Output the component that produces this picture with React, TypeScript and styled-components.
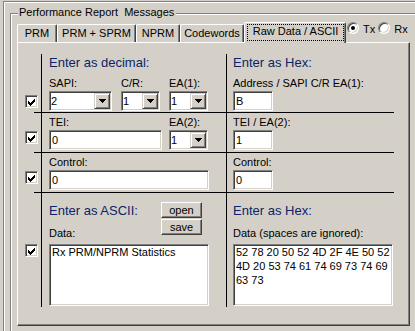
import styled, { createGlobalStyle } from 'styled-components';

const FACE = '#d4d0c8';
const SHADOW = '#808080';
const DARK = '#404040';
const TITLE = '#0a246a';

const GlobalStyle = createGlobalStyle`
  html, body {
    margin: 0;
    padding: 0;
    background: ${FACE};
    overflow: hidden;
  }
  body {
    font-family: "Liberation Sans", Arial, sans-serif;
    font-size: 11px;
    color: #000;
  }
  * {
    box-sizing: border-box;
  }
`;

const CheckMark = () => (
  <svg width="13" height="13" viewBox="0 0 13 13" shapeRendering="crispEdges">
    {[4, 5, 6, 5, 4, 3, 2].map((top, i) => (
      <rect key={i} x={i + 3} y={top + 2} width="1" height="3" fill="#000" />
    ))}
  </svg>
);

const DownArrow = () => (
  <svg width="7" height="4" viewBox="0 0 7 4" shapeRendering="crispEdges">
    <path d="M0 0h7v1H0z M1 1h5v1H1z M2 2h3v1H2z M3 3h1v1H3z" fill="#000" />
  </svg>
);

const Combo = ({ value, w }: { value: string; w: number }) => (
  <ComboBox $w={w}>
    <ComboValue>{value}</ComboValue>
    <DropButton>
      <DownArrow />
    </DropButton>
  </ComboBox>
);

const Check = () => (
  <CheckBox>
    <CheckMark />
  </CheckBox>
);

export default function App() {
  return (
    <>
      <GlobalStyle />
      <Frame>
        <GroupHead>
          <HeadLead />
          <GroupTitle>Performance Report  Messages</GroupTitle>
          <HeadTail />
        </GroupHead>
        <GroupBody>
          <TabStrip>
            <Tab $w={40}>PRM</Tab>
            <Tab $w={79}>PRM + SPRM</Tab>
            <Tab $w={44}>NPRM</Tab>
            <Tab $w={64}>Codewords</Tab>
            <Tab $w={102} $active>
              <FocusRect>Raw Data / ASCII</FocusRect>
            </Tab>
            <RadioGroup>
              <Radio $checked />
              <RadioLabel>Tx</RadioLabel>
              <Radio />
              <RadioLabel>Rx</RadioLabel>
            </RadioGroup>
          </TabStrip>

          <Panel>
            <Form>
              <Row $first>
                <CheckCell $offset={41}>
                  <Check />
                </CheckCell>
                <Cell $left>
                  <Heading>Enter as decimal:</Heading>
                  <FieldRow $mt={7}>
                    <Field>
                      <Label>SAPI:</Label>
                      <Combo value="2" w={63} />
                    </Field>
                    <Field>
                      <Label>C/R:</Label>
                      <Combo value="1" w={39} />
                    </Field>
                    <Field>
                      <Label>EA(1):</Label>
                      <Combo value="1" w={39} />
                    </Field>
                  </FieldRow>
                </Cell>
                <Cell>
                  <Heading>Enter as Hex:</Heading>
                  <Field $mt={7}>
                    <Label>Address / SAPI C/R EA(1):</Label>
                    <TextBox $w={40} defaultValue="B" />
                  </Field>
                </Cell>
              </Row>

              <Row>
                <CheckCell $offset={18}>
                  <Check />
                </CheckCell>
                <Cell $left $compact>
                  <FieldRow>
                    <Field>
                      <Label>TEI:</Label>
                      <TextBox $w={113} defaultValue="0" />
                    </Field>
                    <Field>
                      <Label>EA(2):</Label>
                      <Combo value="1" w={39} />
                    </Field>
                  </FieldRow>
                </Cell>
                <Cell $compact>
                  <Field>
                    <Label>TEI / EA(2):</Label>
                    <TextBox $w={40} defaultValue="1" />
                  </Field>
                </Cell>
              </Row>

              <Row>
                <CheckCell $offset={18}>
                  <Check />
                </CheckCell>
                <Cell $left $compact>
                  <Field>
                    <Label>Control:</Label>
                    <TextBox $w={160} defaultValue="0" />
                  </Field>
                </Cell>
                <Cell $compact>
                  <Field>
                    <Label>Control:</Label>
                    <TextBox $w={40} defaultValue="0" />
                  </Field>
                </Cell>
              </Row>

              <Row>
                <CheckCell $offset={51}>
                  <Check />
                </CheckCell>
                <Cell $left $tall>
                  <DataHead>
                    <div>
                      <Heading>Enter as ASCII:</Heading>
                      <Label $mt={9}>Data:</Label>
                    </div>
                    <ButtonStack>
                      <Button>open</Button>
                      <Button>save</Button>
                    </ButtonStack>
                  </DataHead>
                  <DataArea readOnly defaultValue="Rx PRM/NPRM Statistics" />
                </Cell>
                <Cell $tall>
                  <DataHead>
                    <div>
                      <Heading>Enter as Hex:</Heading>
                      <Label $mt={9}>Data (spaces are ignored):</Label>
                    </div>
                  </DataHead>
                  <DataArea
                    readOnly
                    defaultValue="52 78 20 50 52 4D 2F 4E 50 52 4D 20 53 74 61 74 69 73 74 69 63 73"
                  />
                </Cell>
              </Row>
            </Form>
          </Panel>
        </GroupBody>
      </Frame>
    </>
  );
}

const Frame = styled.div`
  margin: 1px 0 0 3px;
  min-height: 330px;
  padding: 4px 0 0 6px;
  border-top: 1px solid ${SHADOW};
  border-left: 1px solid ${SHADOW};
  box-shadow: inset 1px 1px 0 #fff;
`;

const GroupHead = styled.div`
  display: flex;
  height: 13px;
  line-height: 13px;
`;

const HeadLead = styled.span`
  width: 8px;
  margin-top: 7px;
  border-top: 1px solid ${SHADOW};
  border-left: 1px solid ${SHADOW};
  box-shadow: inset 1px 1px 0 #fff;
`;

const GroupTitle = styled.span`
  padding: 0 2px 0 1px;
  white-space: pre;
`;

const HeadTail = styled.span`
  flex: 1;
  align-self: flex-start;
  margin-top: 7px;
  height: 2px;
  border-top: 1px solid ${SHADOW};
  border-bottom: 1px solid #fff;
`;

const GroupBody = styled.div`
  min-height: 312px;
  border-left: 1px solid ${SHADOW};
  box-shadow: inset 1px 0 0 #fff;
  padding: 1px 0 0 6px;
`;

const TabStrip = styled.div`
  display: flex;
  align-items: flex-end;
  height: 22px;
`;

const Tab = styled.div<{ $w: number; $active?: boolean }>`
  position: relative;
  z-index: ${p => (p.$active ? 1 : 0)};
  width: ${p => p.$w}px;
  height: ${p => (p.$active ? 21 : 18)}px;
  margin-bottom: ${p => (p.$active ? -1 : 0)}px;
  padding: ${p => (p.$active ? '1px 1px 0 2px' : '2px 0 0')};
  background: ${FACE};
  border-top: 1px solid #fff;
  border-left: 1px solid #fff;
  border-right: 1px solid ${DARK};
  border-radius: 2px 2px 0 0;
  box-shadow: inset -1px 0 0 ${SHADOW};
  line-height: 13px;
  text-align: center;
  white-space: nowrap;
`;

const FocusRect = styled.span`
  display: block;
  height: 17px;
  border: 1px dotted #000;
  line-height: 13px;
`;

const RadioGroup = styled.div`
  display: flex;
  align-items: flex-start;
  align-self: flex-start;
  margin: 2px 0 0 1px;
`;

const Radio = styled.span<{ $checked?: boolean }>`
  position: relative;
  width: 12px;
  height: 12px;
  margin-left: 3px;
  border-radius: 50%;
  background: #fff;
  border: 1px solid;
  border-color: ${SHADOW} #fff #fff ${SHADOW};
  box-shadow: inset 1px 1px 0 ${DARK}, inset -1px -1px 0 ${FACE};

  &:first-child {
    margin-left: 0;
  }

  &::after {
    content: '';
    display: ${p => (p.$checked ? 'block' : 'none')};
    position: absolute;
    left: 3px;
    top: 3px;
    width: 4px;
    height: 4px;
    border-radius: 50%;
    background: #000;
  }
`;

const RadioLabel = styled.span`
  margin: 1px 0 0 4px;
  line-height: 13px;
`;

const Panel = styled.div`
  width: 393px;
  height: 284px;
  padding: 11px 0 0 16px;
  border: 1px solid;
  border-color: #fff ${DARK} ${DARK} #fff;
  box-shadow: inset -1px -1px 0 ${SHADOW};
`;

const Form = styled.div`
  width: 360px;
`;

const Row = styled.div<{ $first?: boolean }>`
  display: flex;
  border-top: ${p => (p.$first ? 'none' : '1px solid #000')};
`;

const CheckCell = styled.div<{ $offset: number }>`
  width: 7px;
  padding-top: ${p => p.$offset}px;
`;

const CheckBox = styled.span`
  display: block;
  width: 13px;
  height: 13px;
  margin-left: -9px;
  background: #fff;
  border: 1px solid;
  border-color: ${SHADOW} #fff #fff ${SHADOW};
  box-shadow: inset 1px 1px 0 ${DARK}, inset -1px -1px 0 ${FACE};

  svg {
    display: block;
    margin: -1px;
  }
`;

const Cell = styled.div<{ $left?: boolean; $compact?: boolean; $tall?: boolean }>`
  width: ${p => (p.$left ? 185 : 168)}px;
  border-left: 1px solid #000;
  padding-left: ${p => (p.$left ? 7 : 6)}px;
  padding-top: ${p => (p.$compact ? 3 : p.$tall ? 9 : 1)}px;
  padding-bottom: ${p => (p.$compact ? 2 : 1)}px;
`;

const Heading = styled.div`
  font-size: 13px;
  line-height: 15px;
  color: ${TITLE};
  white-space: nowrap;
`;

const FieldRow = styled.div<{ $mt?: number }>`
  display: flex;
  justify-content: space-between;
  width: 159px;
  margin-top: ${p => p.$mt ?? 0}px;
`;

const Field = styled.div<{ $mt?: number }>`
  display: flex;
  flex-direction: column;
  gap: 1px;
  margin-top: ${p => p.$mt ?? 0}px;
`;

const Label = styled.div<{ $mt?: number }>`
  line-height: 13px;
  white-space: nowrap;
  margin-top: ${p => p.$mt ?? 0}px;
`;

const sunken = `
  background: #fff;
  border: 1px solid;
  border-color: ${SHADOW} #fff #fff ${SHADOW};
  box-shadow: inset 1px 1px 0 ${DARK}, inset -1px -1px 0 ${FACE};
`;

const TextBox = styled.input<{ $w: number }>`
  ${sunken}
  display: block;
  width: ${p => p.$w}px;
  height: 20px;
  margin: 0;
  padding: 0 2px;
  font: inherit;
  color: #000;
  outline: none;
`;

const ComboBox = styled.div<{ $w: number }>`
  ${sunken}
  display: flex;
  width: ${p => p.$w}px;
  height: 20px;
  padding: 1px;
`;

const ComboValue = styled.span`
  flex: 1;
  line-height: 16px;
`;

const DropButton = styled.span`
  display: flex;
  align-items: center;
  justify-content: center;
  width: 16px;
  height: 16px;
  background: ${FACE};
  border: 1px solid;
  border-color: ${FACE} ${DARK} ${DARK} ${FACE};
  box-shadow: inset 1px 1px 0 #fff, inset -1px -1px 0 ${SHADOW};
`;

const DataHead = styled.div`
  display: flex;
  justify-content: space-between;
  align-items: flex-start;
  width: 160px;

  & > div:first-child {
    padding-top: 1px;
  }
`;

const ButtonStack = styled.div`
  display: flex;
  flex-direction: column;
  gap: 1px;
  margin-right: 7px;
`;

const Button = styled.button`
  width: 41px;
  height: 16px;
  padding: 0;
  font: inherit;
  line-height: 12px;
  color: #000;
  background: ${FACE};
  border: 1px solid;
  border-color: #fff ${DARK} ${DARK} #fff;
  box-shadow: inset -1px -1px 0 ${SHADOW};
`;

const DataArea = styled.textarea`
  ${sunken}
  display: block;
  width: 160px;
  height: 62px;
  margin: 4px 0 0;
  padding: 0 0 0 2px;
  font: inherit;
  line-height: 14px;
  color: #000;
  resize: none;
  overflow: hidden;
  outline: none;
`;
